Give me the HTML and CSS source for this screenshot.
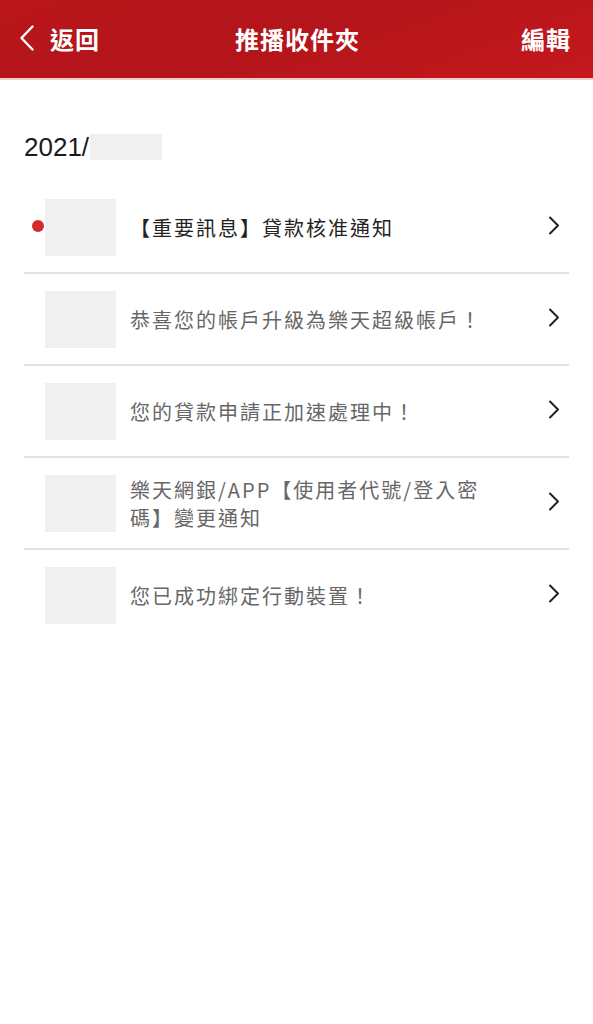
FILE: index.html
```html
<!DOCTYPE html>
<html lang="zh-Hant">
<head>
    <meta charset="UTF-8">
    <title>推播收件夾</title>
    <link rel="stylesheet" href="styles.css">
</head>
<body>
<!-- top bar -->
<div class="topbar">
    <div class="back">
        <svg class="back-icon" width="14" height="26" viewBox="0 0 14 26">
            <polyline points="12.5,1.5 1.5,13 12.5,24.5" fill="none" stroke="#fff" stroke-width="2.4" stroke-linecap="round" stroke-linejoin="round"/>
        </svg>
        <span>返回</span>
    </div>
    <div class="title">推播收件夾</div>
    <div class="edit">編輯</div>
</div>

<div class="inbox">
    <div class="date-row">
        <span class="date">2021/</span>
        <span class="date-mask"></span>
    </div>

    <ul class="messages">
        <li class="message unread">
            <span class="dot"></span>
            <div class="thumb"></div>
            <div class="subject">【重要訊息】貸款核准通知</div>
            <svg class="arrow" width="12" height="20" viewBox="0 0 12 20">
                <polyline points="2,1.5 10,9.5 2,17.5" fill="none" stroke="#222" stroke-width="2" stroke-linecap="round" stroke-linejoin="round"/>
            </svg>
        </li>
        <li class="message">
            <div class="thumb"></div>
            <div class="subject">恭喜您的帳戶升級為樂天超級帳戶！</div>
            <svg class="arrow" width="12" height="20" viewBox="0 0 12 20">
                <polyline points="2,1.5 10,9.5 2,17.5" fill="none" stroke="#222" stroke-width="2" stroke-linecap="round" stroke-linejoin="round"/>
            </svg>
        </li>
        <li class="message">
            <div class="thumb"></div>
            <div class="subject">您的貸款申請正加速處理中！</div>
            <svg class="arrow" width="12" height="20" viewBox="0 0 12 20">
                <polyline points="2,1.5 10,9.5 2,17.5" fill="none" stroke="#222" stroke-width="2" stroke-linecap="round" stroke-linejoin="round"/>
            </svg>
        </li>
        <li class="message">
            <div class="thumb"></div>
            <div class="subject">樂天網銀/APP【使用者代號/登入密碼】變更通知</div>
            <svg class="arrow" width="12" height="20" viewBox="0 0 12 20">
                <polyline points="2,1.5 10,9.5 2,17.5" fill="none" stroke="#222" stroke-width="2" stroke-linecap="round" stroke-linejoin="round"/>
            </svg>
        </li>
        <li class="message">
            <div class="thumb"></div>
            <div class="subject">您已成功綁定行動裝置！</div>
            <svg class="arrow" width="12" height="20" viewBox="0 0 12 20">
                <polyline points="2,1.5 10,9.5 2,17.5" fill="none" stroke="#222" stroke-width="2" stroke-linecap="round" stroke-linejoin="round"/>
            </svg>
        </li>
    </ul>
</div>
</body>
</html>
```

FILE: styles.css
```css
/* --------------------
 Push inbox page
 -------------------- */

:root {
    --bar-red: #b9161b;
    --bar-red-light: #c4181d;
    --line-color: #e2e2e2;
    --mask-color: #f0f0f0;
    --text-dark: #222;
    --text-gray: #676767;
    --dot-red: #d42a2c;
}

* {
    box-sizing: border-box;
}

body {
    margin: 0;
    background: #fff;
    font-family: "Noto Sans CJK TC", "Noto Sans", sans-serif;
}

.topbar {
    height: 80px;
    display: grid;
    grid-template-columns: 1fr auto 1fr;
    align-items: center;
    padding: 0 22px 2px 20px;
    background: linear-gradient(160deg, var(--bar-red) 0%, #b3151a 45%, var(--bar-red-light) 100%);
    border-bottom: 2px solid #f3caca;
    color: #fff;
    font-size: 24px;
    font-weight: bold;
    letter-spacing: 1px;
}

.back {
    display: flex;
    align-items: center;
    gap: 16px;
}

.back-icon {
    display: block;
}

.title {
    text-align: center;
    padding-left: 4px;
}

.edit {
    text-align: right;
}

.inbox {
    padding: 0 24px;
}

.date-row {
    display: flex;
    align-items: center;
    padding-top: 52px;
    height: 82px;
}

.date {
    font-family: "Liberation Sans", Arial, sans-serif;
    font-size: 26px;
    line-height: 30px;
    color: #1a1a1a;
}

.date-mask {
    width: 72px;
    height: 26px;
    margin-left: 1px;
    background: var(--mask-color);
}

.messages {
    list-style: none;
    margin: 20px 0 0;
    padding: 0;
}

.message {
    position: relative;
    display: flex;
    align-items: center;
    padding: 17px 9px 16px 21px;
    border-bottom: 2px solid var(--line-color);
}

.message:last-child {
    border-bottom: none;
}

.dot {
    position: absolute;
    left: 8px;
    top: 38px;
    width: 12px;
    height: 12px;
    border-radius: 50%;
    background: var(--dot-red);
}

.thumb {
    flex: none;
    width: 71px;
    height: 57px;
    margin-right: 14px;
    background: var(--mask-color);
}

.subject {
    flex: 1;
    padding-right: 44px;
    font-size: 20px;
    line-height: 28px;
    letter-spacing: 2px;
    color: var(--text-gray);
}

.unread .subject {
    color: var(--text-dark);
}

.arrow {
    flex: none;
    display: block;
    margin-top: -4px;
}
```
